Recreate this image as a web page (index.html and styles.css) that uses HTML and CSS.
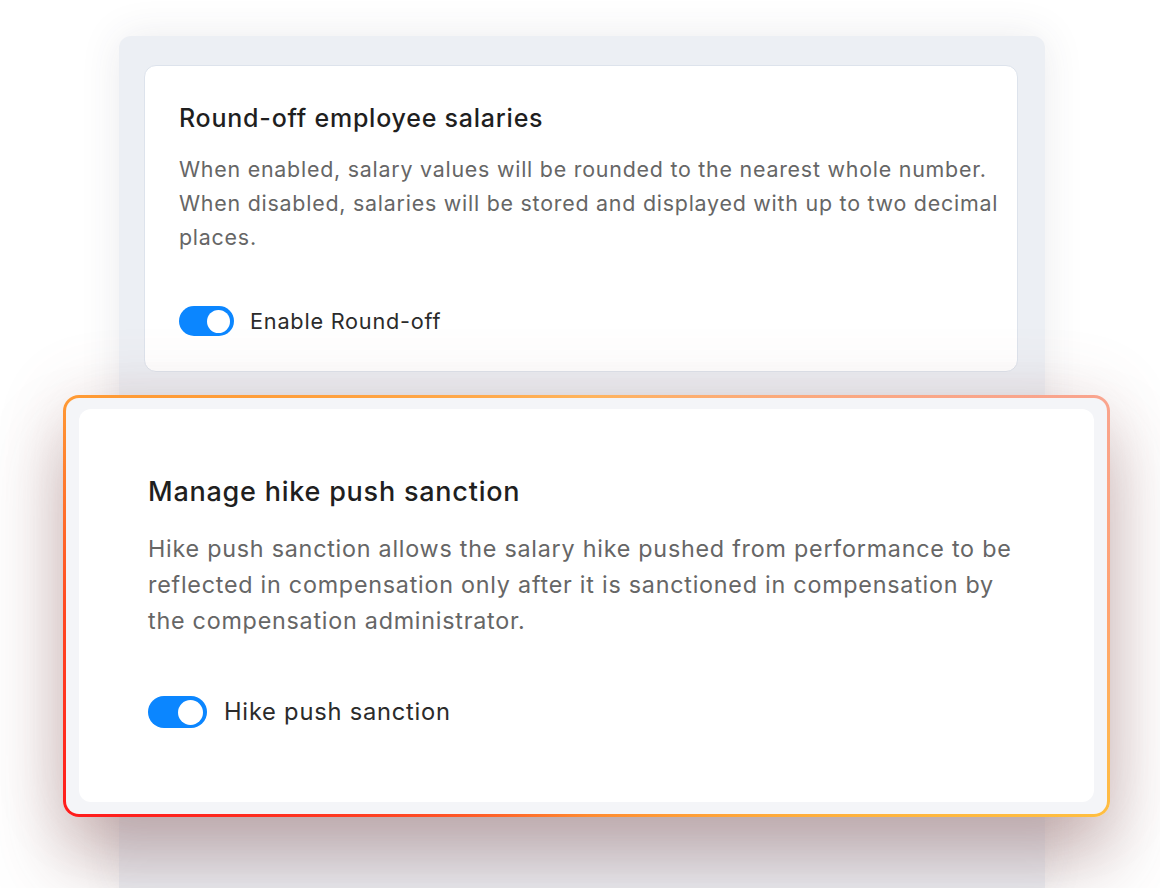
FILE: index.html
```html
<!DOCTYPE html>
<html lang="en">
<head>
<meta charset="utf-8">
<title>Compensation settings</title>
<link rel="stylesheet" href="styles.css">
</head>
<body>
  <main class="panel">
    <section class="card">
      <h2 class="card-title">Round-off employee salaries</h2>
      <p class="card-desc">When enabled, salary values will be rounded to the nearest whole number. When disabled, salaries will be stored and displayed with up to two decimal places.</p>
      <label class="switch-row">
        <span class="switch is-on"><span class="knob"></span></span>
        <span class="switch-label">Enable Round-off</span>
      </label>
    </section>

    <section class="focus-frame">
      <div class="card card-lg">
        <h2 class="card-title">Manage hike push sanction</h2>
        <p class="card-desc">Hike push sanction allows the salary hike pushed from performance to be reflected in compensation only after it is sanctioned in compensation by the compensation administrator.</p>
        <label class="switch-row">
          <span class="switch is-on"><span class="knob"></span></span>
          <span class="switch-label">Hike push sanction</span>
        </label>
      </div>
    </section>
  </main>
</body>
</html>
```

FILE: styles.css
```css
* { box-sizing: border-box; }

html, body {
  margin: 0;
  height: 888px;
  overflow: hidden;
  background: #ffffff;
  font-family: "Inter", "Open Sans", "Liberation Sans", sans-serif;
  letter-spacing: 0.048em;
}

/* settings panel */
.panel {
  width: 926px;
  height: 852px;
  margin: 36px 0 0 119px;
  padding: 29px 27px 0 25px;
  background: #eceff4;
  border-radius: 12px 12px 0 0;
  box-shadow: 0 0 40px rgba(60, 60, 80, 0.10);
}

.card {
  background: #ffffff;
  border: 1px solid #dde3ec;
  border-radius: 12px;
  padding: 36px 14px 35px 34px;
  height: 307px;
}

.card-title {
  margin: 0;
  font-size: 25px;
  line-height: 32px;
  font-weight: 500;
  color: #1f1f1f;
}

.card-desc {
  margin: 18px 0 0;
  font-size: 21.4px;
  line-height: 34px;
  color: #666666;
}

.switch-row {
  display: flex;
  align-items: center;
  gap: 16px;
  margin-top: 52px;
}

.switch {
  display: flex;
  align-items: center;
  justify-content: flex-end;
  width: 55px;
  height: 30px;
  padding: 3px 4px;
  border-radius: 15px;
  background: #0b86ff;
}

.knob {
  width: 23px;
  height: 23px;
  border-radius: 50%;
  background: #ffffff;
}

.switch-label {
  font-size: 21.7px;
  line-height: 30px;
  color: #2b2b2b;
}

/* highlighted card with gradient outline */
.focus-frame {
  margin: 23px -92px 0 -81px;
  height: 422px;
  padding: 11px 13px 12px 13px;
  border: 3px solid transparent;
  border-radius: 16px;
  background:
    linear-gradient(#f4f5f8, #f4f5f8) padding-box,
    conic-gradient(from 0deg,
      #ffb45c 0deg,
      #f9a48e 68deg,
      #ffa272 90deg,
      #ffbe40 112deg,
      #ff8a30 180deg,
      #ff1c1c 248deg,
      #ff4a22 270deg,
      #ff9a34 292deg,
      #ffb45c 360deg) border-box;
  box-shadow:
    0 45px 70px rgba(110, 60, 60, 0.34),
    0 0 70px rgba(150, 90, 90, 0.16);
}

.card-lg {
  height: 100%;
  border: 0;
  border-radius: 12px;
  padding: 66px 69px 0 69px;
}

.card-lg .card-title {
  font-size: 27px;
  line-height: 34px;
}

.card-lg .card-desc {
  margin-top: 22px;
  font-size: 23.3px;
  line-height: 36px;
}

.card-lg .switch-row {
  margin-top: 57px;
  gap: 17px;
}

.card-lg .switch {
  width: 59px;
  height: 32px;
  border-radius: 16px;
}

.card-lg .knob {
  width: 25px;
  height: 25px;
}

.card-lg .switch-label {
  font-size: 23.7px;
}
```
